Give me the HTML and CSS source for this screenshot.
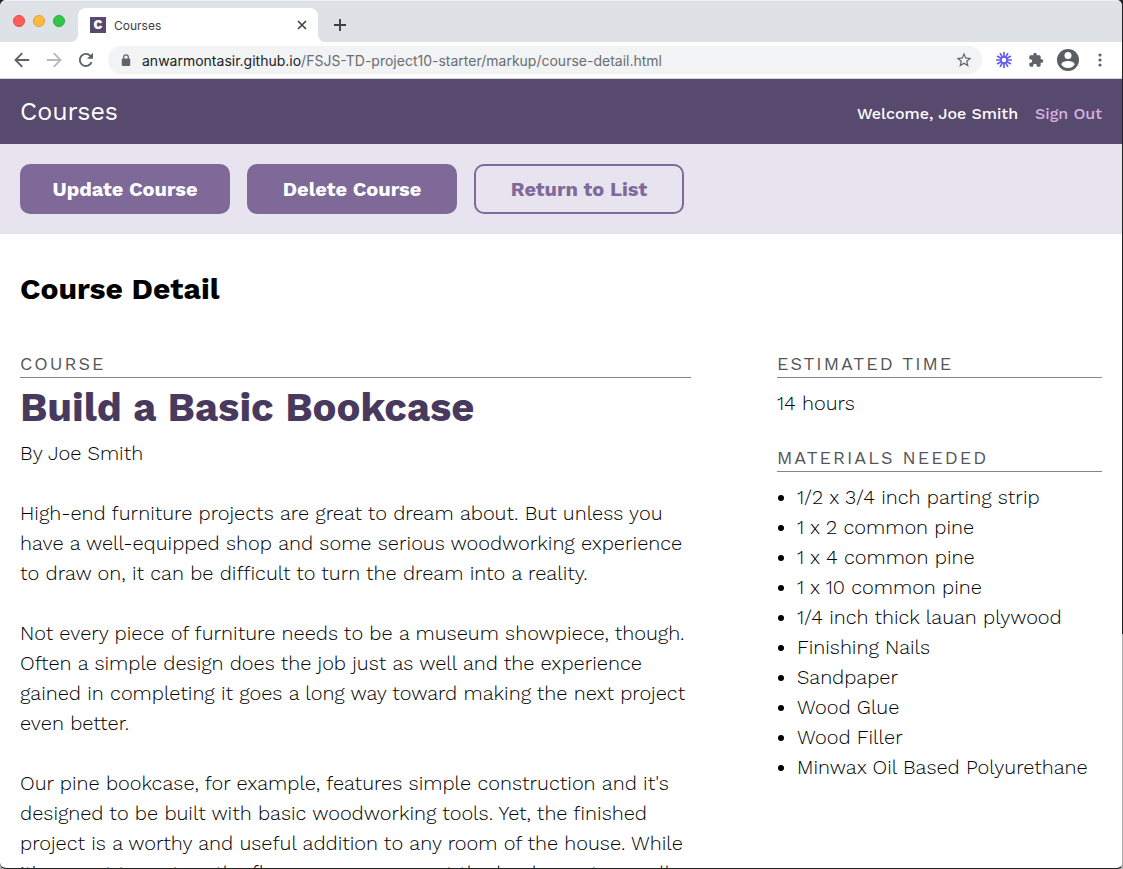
FILE: index.html
```html
<!DOCTYPE html>
<html lang="en">
<head>
<meta charset="utf-8">
<meta name="viewport" content="width=device-width, initial-scale=1">
<title>Courses</title>
<link rel="stylesheet" href="styles.css">
</head>
<body>
<div class="window">
  <div class="tab-strip">
    <div class="lights">
      <button class="light light-close" aria-label="Close window"></button>
      <button class="light light-min" aria-label="Minimize window"></button>
      <button class="light light-max" aria-label="Maximize window"></button>
    </div>
    <div class="tab">
      <span class="favicon">C</span>
      <span class="tab-title">Courses</span>
      <button class="icon-button" aria-label="Close tab"><svg width="10" height="10" viewBox="0 0 10 10"><path d="M1 1l8 8M9 1L1 9" stroke="#3c4043" stroke-width="1.6"/></svg></button>
    </div>
    <button class="icon-button new-tab" aria-label="New tab"><svg width="12" height="12" viewBox="0 0 12 12"><path d="M6 0v12M0 6h12" stroke="#3c4043" stroke-width="1.9"/></svg></button>
  </div>

  <div class="toolbar">
    <button class="icon-button" aria-label="Back"><svg width="16" height="16" viewBox="0 0 16 16" fill="none" stroke="#5f6368" stroke-width="1.9"><path d="M15.2 8H2M8.2 1.2L1.5 8l6.7 6.8"/></svg></button>
    <button class="icon-button" aria-label="Forward"><svg width="16" height="16" viewBox="0 0 16 16" fill="none" stroke="#bababc" stroke-width="1.9"><path d="M.8 8H14M7.8 1.2L14.5 8l-6.7 6.8"/></svg></button>
    <button class="icon-button" aria-label="Reload"><svg width="16" height="16" viewBox="0 0 16 16"><path d="M13.6 10.2A6.1 6.1 0 1 1 12.4 3.8L14 5.4" fill="none" stroke="#5f6368" stroke-width="1.9"/><path d="M15 .8v6H9z" fill="#5f6368"/></svg></button>
    <div class="address">
      <svg class="lock" width="10" height="13" viewBox="0 0 10 13"><rect x=".8" y="4.5" width="8.4" height="7.5" rx="1" fill="#5f6368"/><path d="M2.7 5V3.1a2.3 2.3 0 0 1 4.6 0V5" fill="none" stroke="#5f6368" stroke-width="1.2"/></svg>
      <span class="url"><span class="host">anwarmontasir.github.io</span>/FSJS-TD-project10-starter/markup/course-detail.html</span>
      <button class="icon-button" aria-label="Bookmark this page"><svg width="18" height="18" viewBox="0 0 24 24"><path d="M22 9.24l-7.19-.62L12 2 9.19 8.63 2 9.24l5.46 4.73L5.82 21 12 17.27 18.18 21l-1.63-7.03L22 9.24zM12 15.4l-3.76 2.27 1-4.28-3.32-2.88 4.38-.38L12 6.1l1.71 4.04 4.38.38-3.32 2.88 1 4.28L12 15.4z" fill="#5f6368"/></svg></button>
    </div>
    <div class="extensions">
      <button class="icon-button" aria-label="Loom"><svg width="16" height="16" viewBox="-8 -8 16 16" fill="none" stroke="#625df5" stroke-width="1.7"><circle r="3.1"/><path d="M0-3v-5M0 3v5M-3 0h-5M3 0h5M1.5-2.6L4-6.9M-1.5-2.6L-4-6.9M1.5 2.6L4 6.9M-1.5 2.6L-4 6.9M2.6-1.5L6.9-4M-2.6-1.5L-6.9-4M2.6 1.5L6.9 4M-2.6 1.5L-6.9 4"/></svg></button>
      <button class="icon-button" aria-label="Extensions"><svg width="16" height="16" viewBox="0 0 24 24"><path d="M20.5 11H19V7c0-1.1-.9-2-2-2h-4V3.500a2.500 2.500 0 0 0-5 0V5H4c-1.100 0-1.990.9-1.990 2v3.800H3.500c1.490 0 2.700 1.210 2.700 2.700s-1.210 2.700-2.700 2.700H2V20c0 1.100.9 2 2 2h3.800v-1.500c0-1.490 1.210-2.700 2.700-2.700s2.700 1.210 2.700 2.700V22H17c1.100 0 2-.9 2-2v-4h1.500a2.500 2.500 0 0 0 0-5z" fill="#5f6368"/></svg></button>
      <button class="icon-button" aria-label="Profile"><svg width="22" height="22" viewBox="0 0 22 22"><circle cx="11" cy="11" r="11" fill="#5a5e63"/><circle cx="11" cy="6.600" r="3.500" fill="#fff"/><path d="M4.300 15.500c0-2.500 4.300-3.600 6.700-3.600s6.700 1.100 6.700 3.600A8 8 0 0 1 11 19a8 8 0 0 1-6.700-3.500z" fill="#fff"/></svg></button>
      <button class="icon-button menu" aria-label="Menu"><svg width="4" height="14" viewBox="0 0 4 14" fill="#5f6368"><circle cx="2" cy="2" r="1.600"/><circle cx="2" cy="7" r="1.600"/><circle cx="2" cy="12" r="1.600"/></svg></button>
    </div>
  </div>

  <div class="page">
    <header class="site-header">
      <a class="logo" href="#">Courses</a>
      <nav class="user-nav">
        <span>Welcome, Joe Smith</span>
        <a class="sign-out" href="#">Sign Out</a>
      </nav>
    </header>
    <div class="actions">
      <a class="button" href="#">Update Course</a>
      <a class="button" href="#">Delete Course</a>
      <a class="button button-secondary" href="#">Return to List</a>
    </div>
    <main class="content">
      <h2 class="page-title">Course Detail</h2>
      <div class="columns">
        <section>
          <h3 class="label">Course</h3>
          <h4 class="course-name">Build a Basic Bookcase</h4>
          <p class="text">By Joe Smith</p>
          <p class="text">High-end furniture projects are great to dream about. But unless you have a well-equipped shop and some serious woodworking experience to draw on, it can be difficult to turn the dream into a reality.</p>
          <p class="text">Not every piece of furniture needs to be a museum showpiece, though. Often a simple design does the job just as well and the experience gained in completing it goes a long way toward making the next project even better.</p>
          <p class="text">Our pine bookcase, for example, features simple construction and it's designed to be built with basic woodworking tools. Yet, the finished project is a worthy and useful addition to any room of the house. While it's meant to rest on the floor, you can convert the bookcase to a wall-</p>
        </section>
        <section>
          <h3 class="label">Estimated Time</h3>
          <p class="text time">14 hours</p>
          <h3 class="label">Materials Needed</h3>
          <ul class="materials">
            <li>1/2 x 3/4 inch parting strip</li>
            <li>1 x 2 common pine</li>
            <li>1 x 4 common pine</li>
            <li>1 x 10 common pine</li>
            <li>1/4 inch thick lauan plywood</li>
            <li>Finishing Nails</li>
            <li>Sandpaper</li>
            <li>Wood Glue</li>
            <li>Wood Filler</li>
            <li>Minwax Oil Based Polyurethane</li>
          </ul>
        </section>
      </div>
    </main>
  </div>
</div>
</body>
</html>
```
FILE: styles.css
```css
* { box-sizing: border-box; }

body {
  margin: 0;
  background: linear-gradient(#222 73%, #aaa 73%);
  color: #000;
  font-family: "Work Sans", Inter, sans-serif;
}

h2, h3, h4, p, ul { margin: 0; }
a { text-decoration: none; }

.window {
  display: flex;
  flex-direction: column;
  height: 100vh;
  overflow: hidden;
  border-right: 1px solid transparent;
  border-bottom: 1px solid #222;
  border-radius: 6px;
  background: #fff padding-box;
}

.icon-button {
  display: flex;
  align-items: center;
  justify-content: center;
  flex: none;
  padding: 0;
  border: 0;
  background: none;
}

/* Browser frame */
.tab-strip {
  display: flex;
  flex: none;
  height: 42px;
  padding-left: 13px;
  background: #dee1e6;
  border-top: 1px solid #eef0f2;
}
.lights { display: flex; gap: 8px; width: 65px; padding-top: 14px; }
.light { width: 12px; height: 12px; padding: 0; border: 1px solid; border-radius: 50%; }
.light-close { background: #ff5f57; border-color: #e2463f; }
.light-min { background: #febc3f; border-color: #e0a030; }
.light-max { background: #33c748; border-color: #24ab35; }
.tab {
  display: flex;
  align-items: center;
  gap: 8px;
  position: relative;
  width: 240px;
  margin-top: 7px;
  padding: 0 11px 0 12px;
  border-radius: 8px 8px 0 0;
  background: #fff;
}
.tab::before, .tab::after {
  content: "";
  position: absolute;
  bottom: 0;
  width: 8px;
  height: 8px;
}
.tab::before { left: -8px; background: radial-gradient(circle at 0 0, transparent 8px, #fff 8px); }
.tab::after { right: -8px; background: radial-gradient(circle at 100% 0, transparent 8px, #fff 8px); }
.favicon {
  width: 16px;
  height: 16px;
  background: #584a6e;
  color: #fff;
  font-size: 13px;
  font-weight: 800;
  line-height: 16px;
  text-align: center;
}
.tab-title { flex: 1; color: #3c4043; font-family: Inter, sans-serif; font-size: 12px; }
.new-tab { width: 44px; padding-top: 7px; }

.toolbar {
  display: flex;
  flex: none;
  align-items: center;
  gap: 16px;
  height: 37px;
  padding: 0 20px 0 14px;
  border-bottom: 1px solid #d5d5d9;
  background: #fff;
}
.address {
  display: flex;
  flex: 1;
  align-items: center;
  min-width: 0;
  height: 28px;
  margin-left: -2px;
  padding: 0 9px 0 13px;
  border-radius: 14px;
  background: #f1f3f4;
}
.lock { flex: none; margin-right: 11px; }
.url {
  flex: 1;
  overflow: hidden;
  color: #6a6d71;
  font-family: Inter, sans-serif;
  font-size: 14px;
  white-space: nowrap;
}
.host { color: #202124; }
.extensions { display: flex; align-items: center; gap: 13px; margin-left: -2px; }
.extensions .icon-button:first-child { margin-right: 3px; }
.menu { margin-left: 6px; }

/* Course page */
.page { flex: 1; min-height: 0; overflow: hidden; }
.site-header {
  display: flex;
  align-items: center;
  justify-content: space-between;
  height: 65px;
  padding: 0 20px;
  background: #584a6e;
  color: #fff;
}
.logo { color: #fff; font-size: 25px; }
.user-nav { display: flex; gap: 17px; padding-top: 4px; font-size: 16px; font-weight: 500; }
.sign-out { color: #d9b3e0; }

.actions { display: flex; gap: 17px; padding: 20px; background: #e8e4ef; }
.button {
  width: 210px;
  border: 2px solid #7e6999;
  border-radius: 10px;
  background: #7e6999;
  color: #fff;
  font-size: 20px;
  font-weight: 700;
  line-height: 46px;
  text-align: center;
}
.button-secondary { background: transparent; color: #7e6999; }

.content { padding: 35px 20px 0; }
.page-title { font-size: 30px; font-weight: 700; line-height: 40px; }
.columns { display: grid; grid-template-columns: 671fr 325fr; gap: 86px; padding-top: 39px; }
.label {
  padding-top: 3px;
  border-bottom: 1px solid #858585;
  color: #555;
  font-size: 18px;
  font-weight: 400;
  letter-spacing: 2px;
  line-height: 26px;
  text-transform: uppercase;
}
.course-name { padding: 5px 0; color: #483a5e; font-size: 40px; font-weight: 700; line-height: 50px; }
.text, .materials { font-size: 20px; font-weight: 300; line-height: 30px; }
.text { padding-bottom: 30px; }
.time { padding: 10px 0 24px; }
.materials { padding: 10px 0 0 20px; }
```
